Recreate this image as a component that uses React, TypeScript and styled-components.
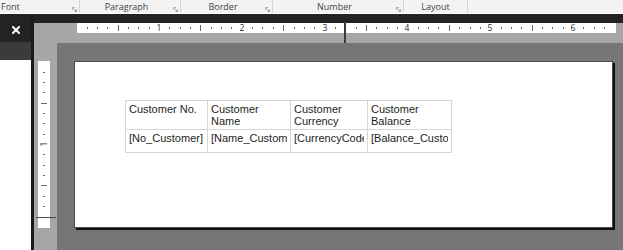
import React from 'react';
import styled, { createGlobalStyle } from 'styled-components';

const GlobalStyle = createGlobalStyle`
  html, body {
    margin: 0;
    padding: 0;
    overflow: hidden;
    background: #767676;
  }
  body {
    font-family: 'Liberation Sans', Arial, sans-serif;
  }
`;

const TICK = 10.35; // one eighth of an inch on screen

const Root = styled.div`
  width: 623px;
  height: 250px;
  display: flex;
  flex-direction: column;
  overflow: hidden;
`;

const Ribbon = styled.div`
  height: 13px;
  display: flex;
  background: #f3f3f3;
  border-bottom: 1px solid #ffffff;
  font-family: 'Open Sans', 'Noto Sans', sans-serif;
  font-size: 9px;
  color: #444;
`;

const Group = styled.div<{ $width: number; $start?: boolean }>`
  width: ${(p) => p.$width}px;
  display: flex;
  align-items: center;
  border-right: 1px solid #d6d6d6;
  padding-left: ${(p) => (p.$start ? 1 : 0)}px;
  box-sizing: border-box;
`;

const GroupLabel = styled.span<{ $start?: boolean }>`
  flex: 1;
  text-align: ${(p) => (p.$start ? 'left' : 'center')};
  line-height: 13px;
  white-space: nowrap;
`;

const Launcher = styled.svg`
  width: 5px;
  height: 5px;
  margin: 5px 2px 0 0;
  flex-shrink: 0;
`;

const Workspace = styled.div`
  flex: 1;
  display: flex;
  min-height: 0;
`;

const SidePanel = styled.div`
  width: 31px;
  display: flex;
  flex-direction: column;
  background: #ffffff;
`;

const PanelHeader = styled.div`
  height: 28px;
  background: #232323;
  display: flex;
  align-items: center;
  justify-content: center;
  padding-top: 4px;
  box-sizing: border-box;
`;

const PanelToolbar = styled.div`
  height: 18px;
  background: #3b3b3b;
`;

const Divider = styled.div`
  width: 3px;
  background: #1b1b1b;
`;

const Designer = styled.div`
  flex: 1;
  display: flex;
  flex-direction: column;
  min-width: 0;
`;

const TopBand = styled.div`
  height: 9px;
  background: #232323;
`;

const RulerRow = styled.div`
  position: relative;
  height: 20px;
  background: #a6a6a6;
  padding-left: 43px;
`;

const HRuler = styled.svg`
  display: block;
  width: 539px;
  height: 10px;
  background: #ffffff;
`;

const ColumnCursor = styled.div`
  position: absolute;
  left: 310px;
  top: -1px;
  width: 2px;
  height: 21px;
  background: #3c3c3c;
`;

const DesignBody = styled.div`
  flex: 1;
  display: flex;
  min-height: 0;
`;

const VRulerColumn = styled.div`
  position: relative;
  width: 23px;
  background: #a6a6a6;
  padding: 18px 0 0 4px;
  box-sizing: border-box;
`;

const VRuler = styled.svg`
  display: block;
  width: 12px;
  height: 167px;
  background: #ffffff;
`;

const RowCursor = styled.div`
  position: absolute;
  left: 2px;
  top: 174px;
  width: 20px;
  height: 1px;
  background: #4a4a4a;
`;

const Canvas = styled.div`
  flex: 1;
  background: #767676;
  padding: 18px 0 0 17px;
`;

const Page = styled.div`
  width: 539px;
  height: 167px;
  box-sizing: border-box;
  background: #ffffff;
  border: 1px solid #4d4d4d;
  box-shadow: 2px 2px 0 #111111;
  padding: 38px 0 0 50px;
`;

const Table = styled.table`
  border-collapse: collapse;
  table-layout: fixed;
  width: 326px;
  font-family: 'Liberation Sans', Arial, sans-serif;
  font-size: 11px;
  line-height: 12px;
  color: #1e1e1e;
`;

const Cell = styled.td<{ $header?: boolean }>`
  border: 1px solid #d6d6d6;
  padding: 2px 3px 0 3px;
  height: ${(p) => (p.$header ? 26 : 20)}px;
  vertical-align: top;
`;

const CellText = styled.div<{ $wrap?: boolean }>`
  overflow: hidden;
  white-space: ${(p) => (p.$wrap ? 'normal' : 'nowrap')};
`;

const columns = [
  { width: 82, header: 'Customer No.', field: '[No_Customer]' },
  { width: 83, header: 'Customer Name', field: '[Name_Customer]' },
  { width: 77, header: 'Customer Currency', field: '[CurrencyCode_Customer]' },
  { width: 84, header: 'Customer Balance', field: '[Balance_Customer]' },
];

const groups = [
  { label: 'Font', width: 80, start: true, launcher: true },
  { label: 'Paragraph', width: 101, launcher: true },
  { label: 'Border', width: 92, launcher: true },
  { label: 'Number', width: 131, launcher: true },
  { label: 'Layout', width: 64, launcher: false },
];

function LauncherIcon() {
  return (
    <Launcher viewBox="0 0 5 5">
      <polyline points="0.5,3 0.5,0.5 3,0.5" fill="none" stroke="#a9b2bc" strokeWidth="1" />
      <line x1="1.5" y1="1.5" x2="4.5" y2="4.5" stroke="#8fa3b8" strokeWidth="1" />
      <polyline points="2.5,4.5 4.5,4.5 4.5,2.5" fill="none" stroke="#8fa3b8" strokeWidth="1" />
    </Launcher>
  );
}

function HorizontalRuler() {
  const marks = [];
  for (let k = 1; k <= 51; k++) {
    const x = Math.round(-0.8 + k * TICK);
    if (k % 8 === 0) {
      marks.push(
        <text key={k} x={x} y={8} fontSize="8.5" textAnchor="middle" fill="#1f2a3a" fontFamily="'Open Sans', 'Noto Sans', sans-serif">
          {k / 8}
        </text>
      );
    } else if (k % 4 === 0) {
      marks.push(<rect key={k} x={x} y={2} width={1} height={6} fill="#6a6a6a" />);
    } else {
      marks.push(<rect key={k} x={x} y={4} width={1} height={2} fill="#6a6a6a" />);
    }
  }
  return <HRuler viewBox="0 0 539 10">{marks}</HRuler>;
}

function VerticalRuler() {
  const marks = [];
  for (let k = 1; k <= 15; k++) {
    const y = Math.round(0.3 + k * TICK);
    if (k % 8 === 0) {
      marks.push(
        <text
          key={k}
          x={0}
          y={0}
          fontSize="8.5"
          textAnchor="middle"
          fill="#1f2a3a"
          fontFamily="'Open Sans', 'Noto Sans', sans-serif"
          transform={`translate(9 ${y}) rotate(-90)`}
        >
          {k / 8}
        </text>
      );
    } else if (k % 4 === 0) {
      marks.push(<rect key={k} x={3} y={y} width={6} height={1} fill="#6a6a6a" />);
    } else {
      marks.push(<rect key={k} x={5} y={y} width={2} height={1} fill="#6a6a6a" />);
    }
  }
  return <VRuler viewBox="0 0 12 167">{marks}</VRuler>;
}

export default function App() {
  return (
    <>
      <GlobalStyle />
      <Root>
        <Ribbon>
          {groups.map((g) => (
            <Group key={g.label} $width={g.width} $start={g.start}>
              <GroupLabel $start={g.start}>{g.label}</GroupLabel>
              {g.launcher && <LauncherIcon />}
            </Group>
          ))}
        </Ribbon>
        <Workspace>
          <SidePanel>
            <PanelHeader>
              <svg width="8" height="8" viewBox="0 0 8 8">
                <path d="M1 1 L7 7 M7 1 L1 7" stroke="#ffffff" strokeWidth="2" strokeLinecap="square" />
              </svg>
            </PanelHeader>
            <PanelToolbar />
          </SidePanel>
          <Divider />
          <Designer>
            <TopBand />
            <RulerRow>
              <HorizontalRuler />
              <ColumnCursor />
            </RulerRow>
            <DesignBody>
              <VRulerColumn>
                <VerticalRuler />
                <RowCursor />
              </VRulerColumn>
              <Canvas>
                <Page>
                  <Table>
                    <colgroup>
                      {columns.map((c) => (
                        <col key={c.header} style={{ width: c.width }} />
                      ))}
                    </colgroup>
                    <tbody>
                      <tr>
                        {columns.map((c) => (
                          <Cell key={c.header} $header>
                            <CellText $wrap>{c.header}</CellText>
                          </Cell>
                        ))}
                      </tr>
                      <tr>
                        {columns.map((c) => (
                          <Cell key={c.field}>
                            <CellText>{c.field}</CellText>
                          </Cell>
                        ))}
                      </tr>
                    </tbody>
                  </Table>
                </Page>
              </Canvas>
            </DesignBody>
          </Designer>
        </Workspace>
      </Root>
    </>
  );
}
